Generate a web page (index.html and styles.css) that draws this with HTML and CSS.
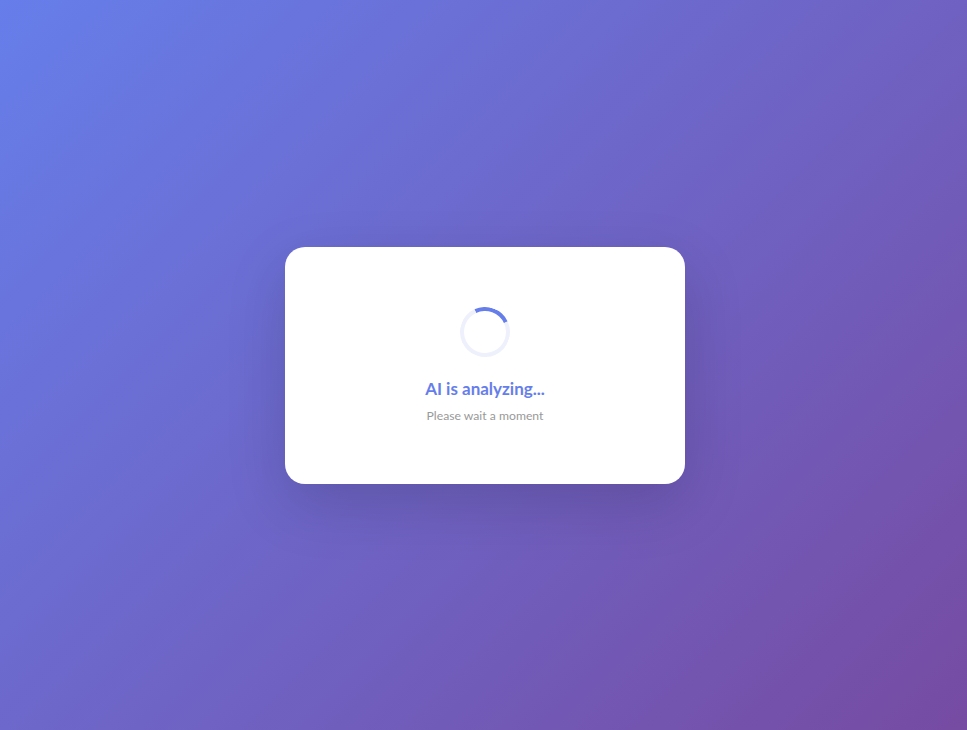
FILE: index.html
```html
<!DOCTYPE html>
<html lang="en">
<head>
<meta charset="utf-8">
<title>AI is analyzing</title>
<link rel="stylesheet" href="styles.css">
</head>
<body>
<main class="page">
  <section class="card">
    <div class="spinner"></div>
    <h1 class="title">AI is analyzing...</h1>
    <p class="subtitle">Please wait a moment</p>
  </section>
</main>
</body>
</html>
```
FILE: styles.css
```css
* { box-sizing: border-box; }
html, body { margin: 0; padding: 0; height: 100%; }
body {
  font-family: "Lato", "Open Sans", "Noto Sans", sans-serif;
  background: linear-gradient(135deg, #667eea 0%, #764ba2 100%);
  min-height: 100vh;
}
.page {
  height: 100vh;
  display: flex;
  align-items: center;
  justify-content: center;
}
.card {
  width: 400px;
  height: 237px;
  margin-left: 3px;
  background: #fff;
  border-radius: 20px;
  box-shadow: 0 20px 60px rgba(0, 0, 0, 0.15);
  display: flex;
  flex-direction: column;
  align-items: center;
  padding-top: 60px;
}
.spinner {
  width: 50px;
  height: 50px;
  border: 4px solid #eef0fc;
  border-top-color: #667eea;
  border-radius: 50%;
  transform: rotate(20deg);
}
.title {
  margin: 20px 0 0;
  font-size: 17px;
  line-height: 24px;
  font-weight: 700;
  color: #667eea;
}
.subtitle {
  margin: 6px 0 0;
  font-size: 12.2px;
  line-height: 17px;
  color: #999;
}
```
